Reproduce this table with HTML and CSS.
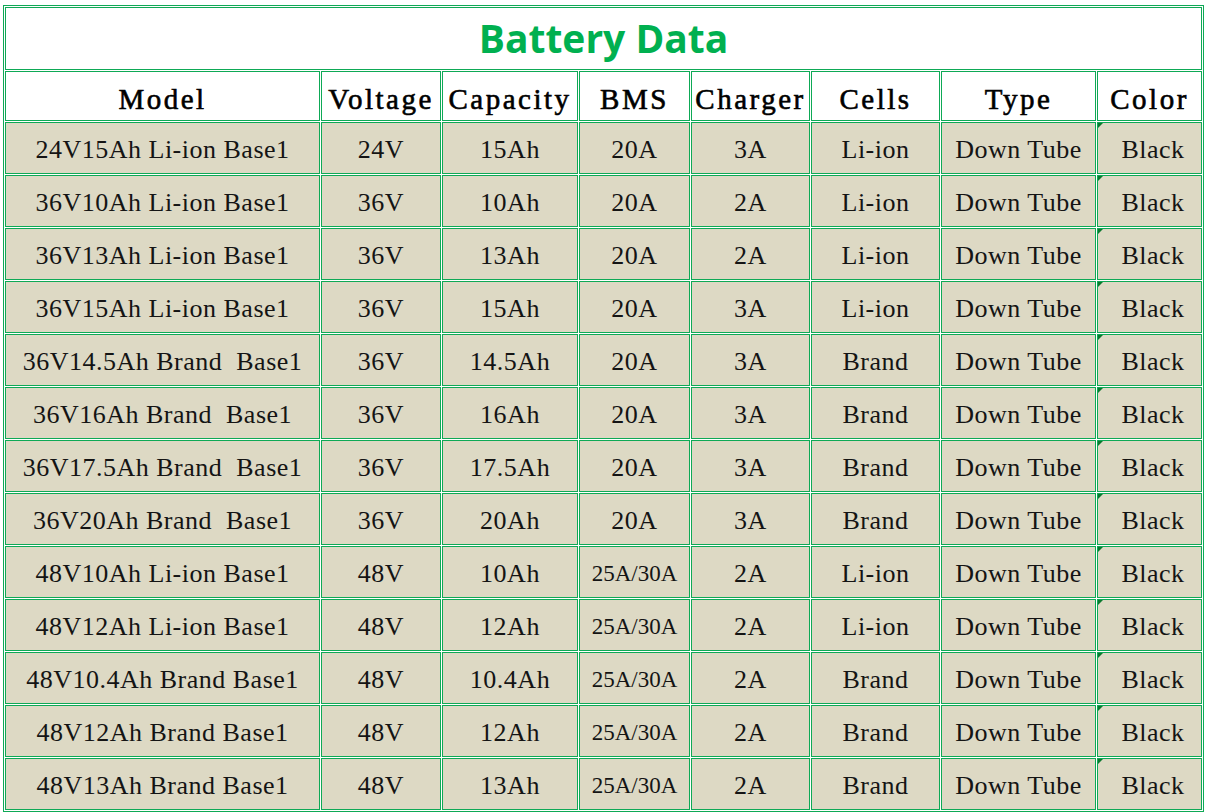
FILE: index.html
```html
<!DOCTYPE html>
<html lang="en">
<head>
<meta charset="utf-8">
<title>Battery Data</title>
<link rel="stylesheet" href="styles.css">
</head>
<body>
<table class="battery-table">
  <colgroup>
    <col class="c-model">
    <col class="c-voltage">
    <col class="c-capacity">
    <col class="c-bms">
    <col class="c-charger">
    <col class="c-cells">
    <col class="c-type">
    <col class="c-color">
  </colgroup>
  <tr class="title-row"><td colspan="8" class="title">Battery Data</td></tr>
  <tr class="head-row">
    <th>Model</th><th>Voltage</th><th>Capacity</th><th>BMS</th><th>Charger</th><th>Cells</th><th>Type</th><th>Color</th>
  </tr>
  <tr><td>24V15Ah Li-ion Base1</td><td>24V</td><td>15Ah</td><td>20A</td><td>3A</td><td>Li-ion</td><td>Down Tube</td><td class="flag"> Black</td></tr>
  <tr><td>36V10Ah Li-ion Base1</td><td>36V</td><td>10Ah</td><td>20A</td><td>2A</td><td>Li-ion</td><td>Down Tube</td><td class="flag"> Black</td></tr>
  <tr><td>36V13Ah Li-ion Base1</td><td>36V</td><td>13Ah</td><td>20A</td><td>2A</td><td>Li-ion</td><td>Down Tube</td><td class="flag"> Black</td></tr>
  <tr><td>36V15Ah Li-ion Base1</td><td>36V</td><td>15Ah</td><td>20A</td><td>3A</td><td>Li-ion</td><td>Down Tube</td><td class="flag"> Black</td></tr>
  <tr><td>36V14.5Ah Brand  Base1</td><td>36V</td><td>14.5Ah</td><td>20A</td><td>3A</td><td>Brand</td><td>Down Tube</td><td class="flag"> Black</td></tr>
  <tr><td>36V16Ah Brand  Base1</td><td>36V</td><td>16Ah</td><td>20A</td><td>3A</td><td>Brand</td><td>Down Tube</td><td class="flag"> Black</td></tr>
  <tr><td>36V17.5Ah Brand  Base1</td><td>36V</td><td>17.5Ah</td><td>20A</td><td>3A</td><td>Brand</td><td>Down Tube</td><td class="flag"> Black</td></tr>
  <tr><td>36V20Ah Brand  Base1</td><td>36V</td><td>20Ah</td><td>20A</td><td>3A</td><td>Brand</td><td>Down Tube</td><td class="flag"> Black</td></tr>
  <tr><td>48V10Ah Li-ion Base1</td><td>48V</td><td>10Ah</td><td class="bms">25A/30A</td><td>2A</td><td>Li-ion</td><td>Down Tube</td><td class="flag"> Black</td></tr>
  <tr><td>48V12Ah Li-ion Base1</td><td>48V</td><td>12Ah</td><td class="bms">25A/30A</td><td>2A</td><td>Li-ion</td><td>Down Tube</td><td class="flag"> Black</td></tr>
  <tr><td>48V10.4Ah Brand Base1</td><td>48V</td><td>10.4Ah</td><td class="bms">25A/30A</td><td>2A</td><td>Brand</td><td>Down Tube</td><td class="flag"> Black</td></tr>
  <tr><td>48V12Ah Brand Base1</td><td>48V</td><td>12Ah</td><td class="bms">25A/30A</td><td>2A</td><td>Brand</td><td>Down Tube</td><td class="flag"> Black</td></tr>
  <tr><td>48V13Ah Brand Base1</td><td>48V</td><td>13Ah</td><td class="bms">25A/30A</td><td>2A</td><td>Brand</td><td>Down Tube</td><td class="flag"> Black</td></tr>
</table>
</body>
</html>
```
FILE: styles.css
```css
html, body {
  margin: 0;
  padding: 0;
  background: #ffffff;
}

body {
  padding: 5px 0 0 3px;
}

.battery-table {
  table-layout: fixed;
  width: 1201px;
  border: 1px solid #0ea956;
  border-collapse: separate;
  border-spacing: 1px;
  background: #ffffff;
  font-family: "Liberation Serif", "DejaVu Serif", serif;
  color: #141414;
}

.c-model { width: 315px; }
.c-voltage { width: 120px; }
.c-capacity { width: 136px; }
.c-bms { width: 111px; }
.c-charger { width: 119px; }
.c-cells { width: 129px; }
.c-type { width: 155px; }
.c-color { width: 105px; }

.battery-table td,
.battery-table th {
  border: 1px solid #0ea956;
  padding: 0;
  text-align: center;
  vertical-align: middle;
  white-space: pre;
  overflow: hidden;
}

.battery-table tr {
  height: 52px;
}

.battery-table td {
  background: #ddd9c4;
  font-size: 26px;
  letter-spacing: 0.5px;
  padding-top: 4px;
}

.battery-table td.bms {
  font-size: 23px;
  letter-spacing: 0;
}

.battery-table tr.title-row {
  height: 63px;
}

.battery-table td.title {
  background: #ffffff;
  color: #00b050;
  font-family: "Open Sans", "Noto Sans", sans-serif;
  font-weight: 700;
  font-size: 39px;
  letter-spacing: 0;
  padding: 0 0 2px 0;
}

.battery-table tr.head-row {
  height: 50px;
}

.battery-table th {
  background: #ffffff;
  font-weight: 400;
  font-size: 29px;
  letter-spacing: 2.5px;
  color: #000000;
  padding-top: 6px;
  -webkit-text-stroke: 0.6px #000000;
}

.battery-table td.flag {
  position: relative;
}

.battery-table td.flag::before {
  content: "";
  position: absolute;
  left: 0;
  top: 0;
  width: 0;
  height: 0;
  border-top: 5px solid #0b7a2e;
  border-right: 5px solid transparent;
}
```
